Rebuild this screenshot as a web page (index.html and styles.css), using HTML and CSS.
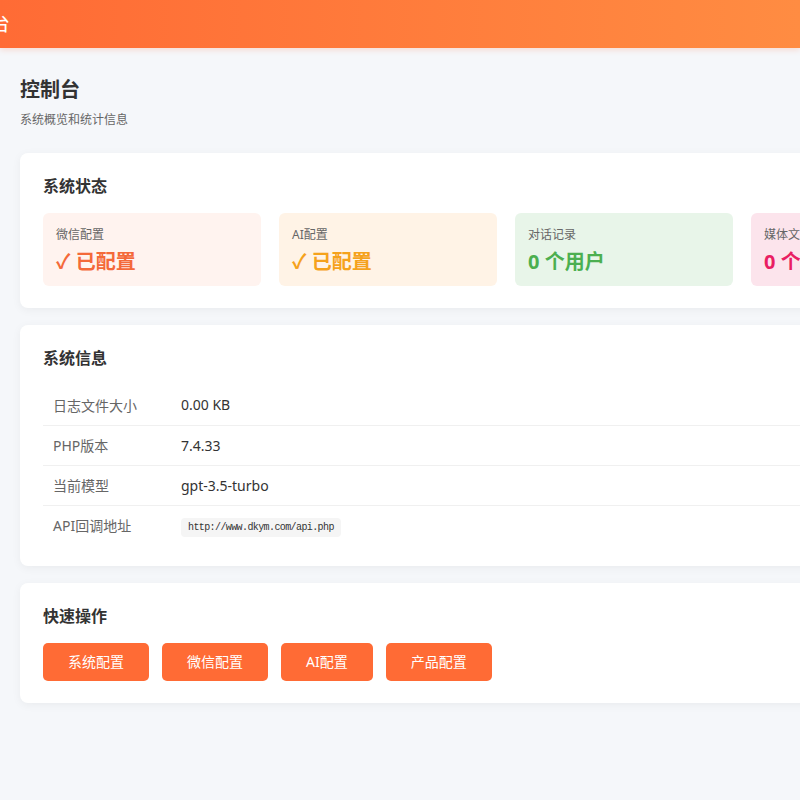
FILE: index.html
```html
<!DOCTYPE html>
<html lang="zh-CN">

<head>
    <meta charset="UTF-8">
    <meta name="viewport" content="width=device-width, initial-scale=1.0">
    <title>控制台</title>
    <link rel="stylesheet" href="styles.css">
</head>

<body>
    <header class="topbar">
        <div class="topbar-title">管理控制台</div>
    </header>

    <main class="page">
        <div class="page-head">
            <h1>控制台</h1>
            <p class="page-desc">系统概览和统计信息</p>
        </div>

        <!-- 系统状态 -->
        <section class="card">
            <h2 class="card-title">系统状态</h2>
            <div class="stat-grid">
                <div class="stat stat-wechat">
                    <div class="stat-label">微信配置</div>
                    <div class="stat-value">✓ 已配置</div>
                </div>
                <div class="stat stat-ai">
                    <div class="stat-label">AI配置</div>
                    <div class="stat-value">✓ 已配置</div>
                </div>
                <div class="stat stat-chat">
                    <div class="stat-label">对话记录</div>
                    <div class="stat-value">0 个用户</div>
                </div>
                <div class="stat stat-media">
                    <div class="stat-label">媒体文件</div>
                    <div class="stat-value">0 个文件</div>
                </div>
            </div>
        </section>

        <!-- 系统信息 -->
        <section class="card">
            <h2 class="card-title">系统信息</h2>
            <table class="info-table">
                <tr>
                    <td class="info-key">日志文件大小</td>
                    <td>0.00 KB</td>
                </tr>
                <tr>
                    <td class="info-key">PHP版本</td>
                    <td>7.4.33</td>
                </tr>
                <tr>
                    <td class="info-key">当前模型</td>
                    <td>gpt-3.5-turbo</td>
                </tr>
                <tr>
                    <td class="info-key">API回调地址</td>
                    <td><code>http://www.dkym.com/api.php</code></td>
                </tr>
            </table>
        </section>

        <!-- 快速操作 -->
        <section class="card">
            <h2 class="card-title">快速操作</h2>
            <div class="actions">
                <a class="btn" href="#">系统配置</a>
                <a class="btn" href="#">微信配置</a>
                <a class="btn" href="#">AI配置</a>
                <a class="btn" href="#">产品配置</a>
            </div>
        </section>
    </main>
</body>

</html>
```

FILE: styles.css
```css
:root {
    --primary-color: #ff6b35;
    --primary-light: #ff8c42;
    --background-color: #f5f7fa;
    --card-bg: #ffffff;
    --text-color: #333;
    --muted-color: #666;
    --border-color: #f0f0f0;
    --font-family: "Noto Sans", "Noto Sans CJK SC", sans-serif;
}

* {
    box-sizing: border-box;
}

html,
body {
    overflow: hidden;
}

body {
    margin: 0;
    font-family: var(--font-family);
    background-color: var(--background-color);
    color: var(--text-color);
}

.topbar {
    height: 48px;
    background: linear-gradient(90deg, var(--primary-color), var(--primary-light));
    box-shadow: 0 2px 6px rgba(255, 107, 53, 0.2);
    display: flex;
    align-items: center;
    color: #fff;
}

.topbar-title {
    font-size: 20px;
    line-height: 1;
    margin-left: -90px;
    white-space: nowrap;
}

.page {
    width: 1012px;
    padding: 20px;
}

.page-head {
    padding: 10px 0 25px;
}

h1 {
    font-size: 20px;
    font-weight: bold;
    margin: 0 0 10px;
    line-height: 24px;
}

.page-desc {
    font-size: 12px;
    color: var(--muted-color);
    margin: 0;
    line-height: 16px;
}

.card {
    background-color: var(--card-bg);
    border-radius: 8px;
    box-shadow: 0 2px 10px rgba(0, 0, 0, 0.05);
    padding: 22px 23px;
    margin-bottom: 17px;
}

.card-title {
    font-size: 16px;
    font-weight: bold;
    margin: 0 0 16px;
    line-height: 22px;
}

.stat-grid {
    display: grid;
    grid-template-columns: repeat(4, 218px);
    gap: 18px;
}

.stat {
    border-radius: 6px;
    padding: 14px 13px 12px;
    height: 73px;
}

.stat-label {
    font-size: 12px;
    color: var(--muted-color);
    line-height: 16px;
    margin-bottom: 6px;
}

.stat-value {
    font-size: 20px;
    font-weight: bold;
    line-height: 26px;
}

.stat-wechat {
    background-color: #fff3ef;
}

.stat-wechat .stat-value {
    color: #f4693a;
}

.stat-ai {
    background-color: #fff3e6;
}

.stat-ai .stat-value {
    color: #f5a21c;
}

.stat-chat {
    background-color: #e8f5e9;
}

.stat-chat .stat-value {
    color: #4caf50;
}

.stat-media {
    background-color: #fce4ec;
}

.stat-media .stat-value {
    color: #e91e63;
}

.info-table {
    width: 100%;
    border-collapse: collapse;
    font-size: 14px;
    margin-top: 4px;
}

.info-table td {
    padding: 0 10px;
    height: 40px;
    border-bottom: 1px solid var(--border-color);
    color: var(--text-color);
}

.info-table tr:last-child td {
    border-bottom: none;
    height: 39px;
}

.info-table .info-key {
    width: 128px;
    color: var(--muted-color);
}

code {
    font-family: "Liberation Mono", monospace;
    font-size: 10px;
    letter-spacing: -0.6px;
    background-color: #f5f5f5;
    padding: 4px 7px;
    border-radius: 4px;
    color: #333;
}

.actions {
    display: flex;
    gap: 13px;
}

.btn {
    display: inline-block;
    background-color: var(--primary-color);
    color: #fff;
    text-decoration: none;
    font-size: 14px;
    line-height: 38px;
    height: 38px;
    padding: 0 25px;
    border-radius: 5px;
}
```
